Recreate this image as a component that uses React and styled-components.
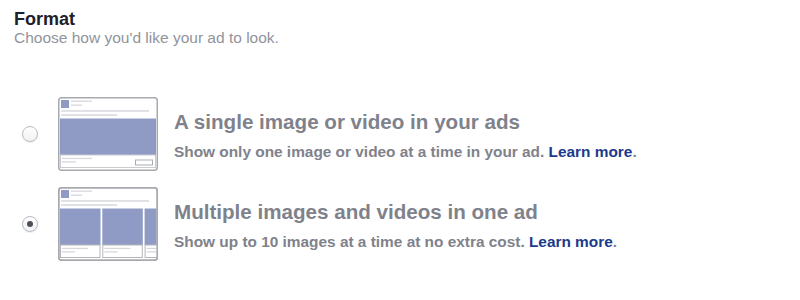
import React, { useState } from "react";
import styled, { createGlobalStyle } from "styled-components";

const GlobalStyle = createGlobalStyle`
  body {
    margin: 0;
    background: #fff;
    font-family: "Liberation Sans", Arial, sans-serif;
  }
`;

const Page = styled.div`
  padding: 9px 14px 0;
`;

const Heading = styled.h2`
  margin: 0;
  font-size: 18px;
  font-weight: bold;
  color: #1d2129;
  line-height: 20px;
`;

const Lead = styled.p`
  margin: 0;
  font-size: 15.5px;
  color: #90949c;
  line-height: 18px;
`;

const Options = styled.div`
  display: flex;
  flex-direction: column;
  gap: 16px;
  margin-top: 50px;
`;

const Option = styled.label`
  display: flex;
  align-items: flex-start;
  cursor: pointer;
`;

const Radio = styled.span`
  align-self: center;
  width: 14px;
  height: 14px;
  margin-left: 8px;
  border-radius: 50%;
  border: 1px solid #b9bbc0;
  background: linear-gradient(#ffffff, #f1f2f4);
  box-shadow: 0 1px 1px rgba(0, 0, 0, 0.08);
  display: flex;
  align-items: center;
  justify-content: center;
  flex-shrink: 0;

  &::after {
    content: "";
    width: 6px;
    height: 6px;
    border-radius: 50%;
    background: #4b4f56;
    display: ${(p) => (p.$checked ? "block" : "none")};
  }
`;

const Thumb = styled.svg`
  display: block;
  margin-left: 20px;
  flex-shrink: 0;
`;

const Text = styled.div`
  margin-left: 16px;
  padding-top: 12px;
`;

const Title = styled.div`
  font-size: 20.6px;
  font-weight: bold;
  color: #7f828b;
  line-height: 26px;
`;

const Desc = styled.div`
  margin-top: 8px;
  font-size: 15.4px;
  font-weight: bold;
  color: #7f828b;
  line-height: 18px;
`;

const Link = styled.a`
  color: #1c3a8c;
  text-decoration: none;
`;

const IMG = "#8f9bc5";
const LINE = "#d6d8dc";
const EDGE = "#a7a9ae";

function Header() {
  return (
    <>
      <rect x="0.75" y="0.75" width="98.5" height="72.5" rx="3" fill="#fff" stroke={EDGE} strokeWidth="1.5" />
      <rect x="3" y="3" width="8" height="8" fill={IMG} />
      <rect x="13" y="3.5" width="21" height="1.3" fill={LINE} />
      <rect x="13" y="7.5" width="11" height="1.3" fill={LINE} />
      <rect x="3" y="13.2" width="88" height="1.5" fill={LINE} />
      <rect x="3" y="17.3" width="56" height="1.5" fill={LINE} />
    </>
  );
}

function SingleThumb() {
  return (
    <Thumb width="100" height="74" viewBox="0 0 100 74">
      <Header />
      <rect x="2" y="21.5" width="96" height="36.5" fill={IMG} />
      <rect x="2.5" y="58" width="95" height="12.5" fill="#fff" stroke="#c9cbcf" strokeWidth="1" />
      <rect x="4" y="60.8" width="30" height="1.3" fill={LINE} />
      <rect x="4" y="64.2" width="14" height="1.3" fill={LINE} />
      <rect x="77.5" y="63" width="17" height="5" fill="#fff" stroke="#a9abb0" strokeWidth="1" />
    </Thumb>
  );
}

function CarouselThumb() {
  const cards = [2, 44.3, 86.6];
  return (
    <Thumb width="100" height="74" viewBox="0 0 100 74">
      <defs>
        <clipPath id="frame">
          <rect x="1.5" y="1.5" width="97" height="71" />
        </clipPath>
      </defs>
      <Header />
      <g clipPath="url(#frame)">
        {cards.map((x) => (
          <g key={x}>
            <rect x={x} y="21.5" width="40.5" height="36.5" fill={IMG} />
            <rect x={x + 0.5} y="58" width="39.5" height="12.5" fill="#fff" stroke="#b4b6bb" strokeWidth="1" />
            <rect x={x + 2} y="60.8" width="26" height="1.3" fill={LINE} />
            <rect x={x + 2} y="64.2" width="13" height="1.3" fill={LINE} />
          </g>
        ))}
      </g>
      <rect x="0.75" y="0.75" width="98.5" height="72.5" rx="3" fill="none" stroke={EDGE} strokeWidth="1.5" />
    </Thumb>
  );
}

const formats = [
  {
    id: "single",
    title: "A single image or video in your ads",
    desc: "Show only one image or video at a time in your ad.",
    Preview: SingleThumb,
  },
  {
    id: "carousel",
    title: "Multiple images and videos in one ad",
    desc: "Show up to 10 images at a time at no extra cost.",
    Preview: CarouselThumb,
  },
];

export default function App() {
  const [selected, setSelected] = useState("carousel");

  return (
    <>
      <GlobalStyle />
      <Page>
        <Heading>Format</Heading>
        <Lead>Choose how you'd like your ad to look.</Lead>
        <Options>
          {formats.map(({ id, title, desc, Preview }) => (
            <Option key={id} onClick={() => setSelected(id)}>
              <Radio $checked={selected === id} />
              <Preview />
              <Text>
                <Title>{title}</Title>
                <Desc>
                  {desc} <Link href="#">Learn more</Link>.
                </Desc>
              </Text>
            </Option>
          ))}
        </Options>
      </Page>
    </>
  );
}
